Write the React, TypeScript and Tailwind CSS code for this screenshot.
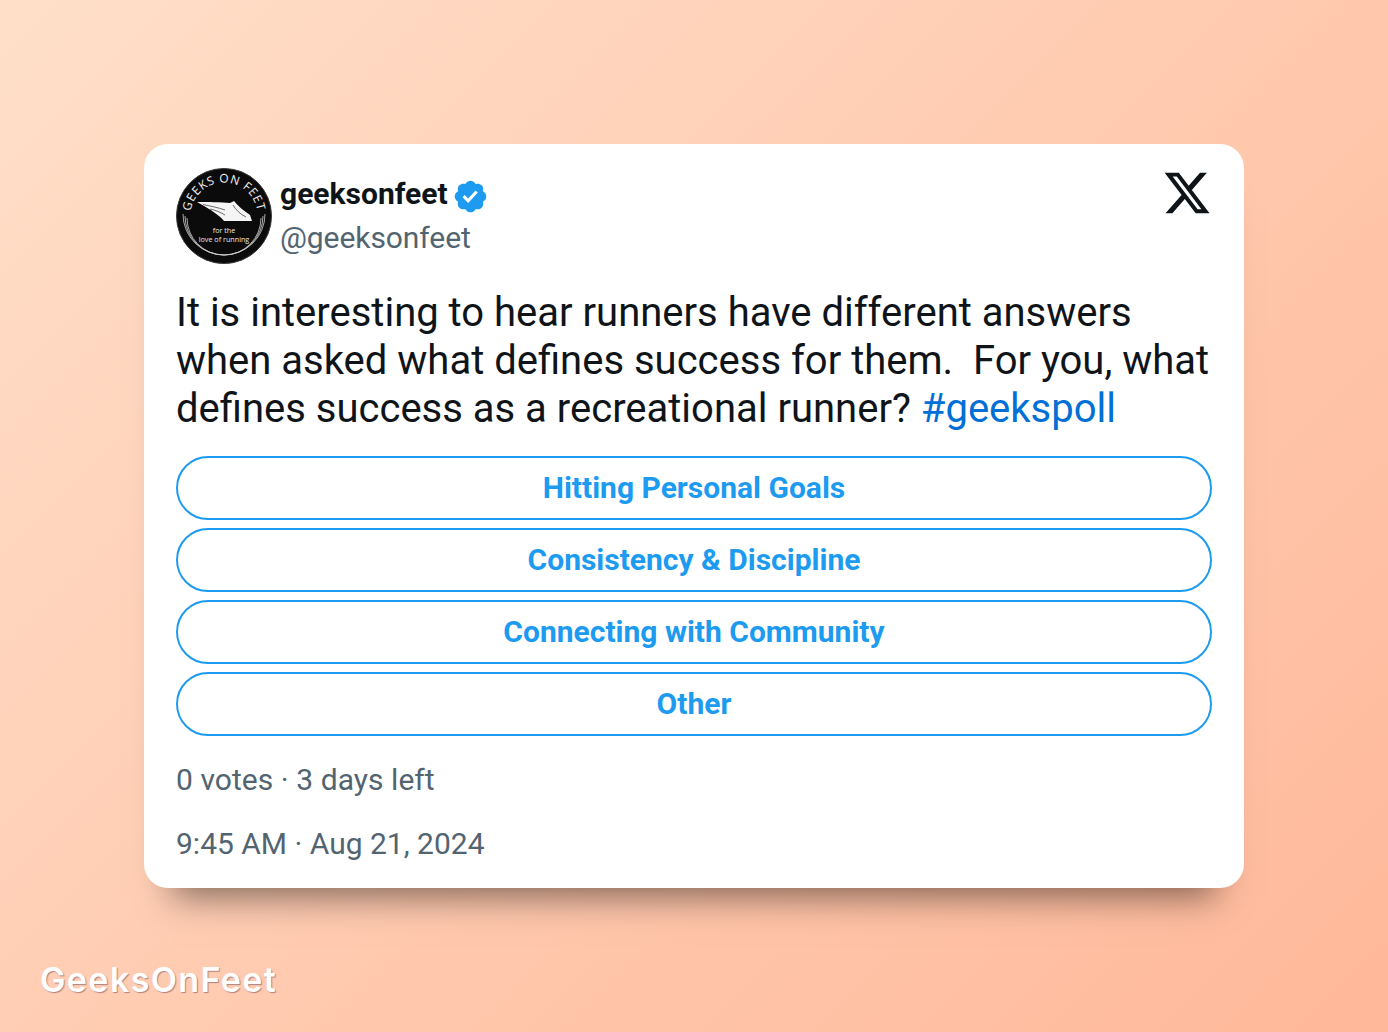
const options = [
  "Hitting Personal Goals",
  "Consistency & Discipline",
  "Connecting with Community",
  "Other",
];

function Avatar() {
  return (
    <svg width="96" height="96" viewBox="0 0 96 96" className="shrink-0">
      <circle cx="48" cy="48" r="47.5" fill="#0b0b0b" stroke="#3a3a3a" strokeWidth="1" />
      <defs>
        <path id="badge-arc" d="M 14.5 52 A 33.7 33.7 0 1 1 81.5 52" />
      </defs>
      <text fill="#f2f2f2" fontSize="12" letterSpacing="0.7" fontFamily="'Open Sans', sans-serif">
        <textPath href="#badge-arc" startOffset="50%" textAnchor="middle">GEEKS ON FEET</textPath>
      </text>
      <g fill="none" stroke="#cfcfcf" strokeWidth="0.8">
        <path d="M 7 46 A 41 41 0 1 0 89 46" />
        <path d="M 9 48 A 39 39 0 1 0 87 48" />
        <path d="M 11 50 A 37 37 0 1 0 85 50" />
      </g>
      <path
        d="M21 34 C32 34 45 34 54 35 L58 33 C62 38 68 43 74 47 L76 53 L60 53 L48 53 C44 48 36 42 21 34 Z"
        fill="#f5f5f5"
      />
      <g fill="none" stroke="#0b0b0b" strokeWidth="0.6">
        <path d="M27 36.5 C34 38 42 39.5 49 42" />
        <path d="M34 41 C39 42 44 44 49 47" />
        <path d="M57 37 C60 42 64 46 70 49" />
      </g>
      <text x="48" y="64.5" textAnchor="middle" fill="#e8e8e8" fontSize="7.2" fontFamily="'Open Sans', sans-serif">for the</text>
      <text x="48" y="73.5" textAnchor="middle" fill="#e8e8e8" fontSize="7.2" fontFamily="'Open Sans', sans-serif">love of running</text>
    </svg>
  );
}

function Verified() {
  return (
    <svg width="37" height="37" viewBox="0 0 24 24" className="shrink-0 mt-1">
      <path
        fill="#1d9bf0"
        d="M22.25 12c0-1.43-.88-2.67-2.19-3.34.46-1.39.2-2.9-.81-3.91s-2.52-1.27-3.91-.81c-.66-1.31-1.91-2.19-3.34-2.19s-2.67.88-3.33 2.19c-1.4-.46-2.91-.2-3.92.81s-1.26 2.52-.8 3.91c-1.31.67-2.2 1.91-2.2 3.34s.89 2.67 2.2 3.34c-.46 1.39-.21 2.9.8 3.91s2.52 1.26 3.91.81c.67 1.31 1.91 2.19 3.34 2.19s2.68-.88 3.34-2.19c1.39.45 2.9.2 3.91-.81s1.27-2.52.81-3.91c1.31-.67 2.19-1.91 2.19-3.34zm-11.71 4.2L6.8 12.46l1.41-1.42 2.26 2.26 4.8-5.23 1.47 1.36-6.2 6.77z"
      />
    </svg>
  );
}

function XLogo() {
  return (
    <svg width="50" height="50" viewBox="0 0 24 24" fill="#0f1419" className="shrink-0">
      <path d="M18.244 2.25h3.308l-7.227 8.26 8.502 11.24H16.17l-5.214-6.817L4.99 21.75H1.68l7.73-8.835L1.254 2.25H8.08l4.713 6.231zm-1.161 17.52h1.833L7.084 4.126H5.117z" />
    </svg>
  );
}

export default function App() {
  return (
    <div className="h-[1032px] flex flex-col items-center pt-[144px] bg-[linear-gradient(135deg,#ffdfc9_0%,#ffcdb3_45%,#ffb899_100%)] font-['Roboto',sans-serif] overflow-hidden">
      <div className="w-[1100px] h-[744px] bg-white rounded-[24px] pt-6 pl-8 pr-8 shadow-[0_36px_34px_-28px_rgba(0,0,0,0.5)]">
        <div className="flex justify-between">
          <div className="flex gap-2">
            <Avatar />
            <div className="flex flex-col">
              <div className="flex items-center gap-1 h-[52px]">
                <span className="text-[30px] font-bold text-[#0f1419] leading-[52px]">geeksonfeet</span>
                <Verified />
              </div>
              <span className="text-[30px] text-[#536471] leading-[36px] tracking-[-0.08px]">@geeksonfeet</span>
            </div>
          </div>
          <XLogo />
        </div>
        <p className="mt-[25px] h-[143px] text-[40px] leading-[48px] text-[#0f1419] whitespace-pre-wrap">
          <span>{"It is interesting to hear runners have different answers\nwhen asked what defines success for them.  For you, what\ndefines success as a recreational runner? "}</span>
          <span className="text-[#006fd6]">#geekspoll</span>
        </p>
        <div className="mt-6 flex flex-col gap-2 w-[1036px]">
          {options.map((option) => (
            <div
              key={option}
              className="h-16 rounded-full border-2 border-[#1d9bf0] flex items-center justify-center pb-0.5 text-[30px] font-bold text-[#1d9bf0]"
            >
              {option}
            </div>
          ))}
        </div>
        <p className="mt-6 text-[30px] leading-10 text-[#536471] [word-spacing:0.2px]">0 votes · 3 days left</p>
        <p className="mt-6 text-[30px] leading-10 text-[#536471]">9:45 AM · Aug 21, 2024</p>
      </div>
      <div className="self-start ml-10 mt-[70px] font-['Inter',sans-serif] text-[34px] leading-[44px] font-semibold tracking-[1.4px] text-white [text-shadow:1px_1px_1px_rgba(90,60,80,0.5)]">
        GeeksOnFeet
      </div>
    </div>
  );
}
